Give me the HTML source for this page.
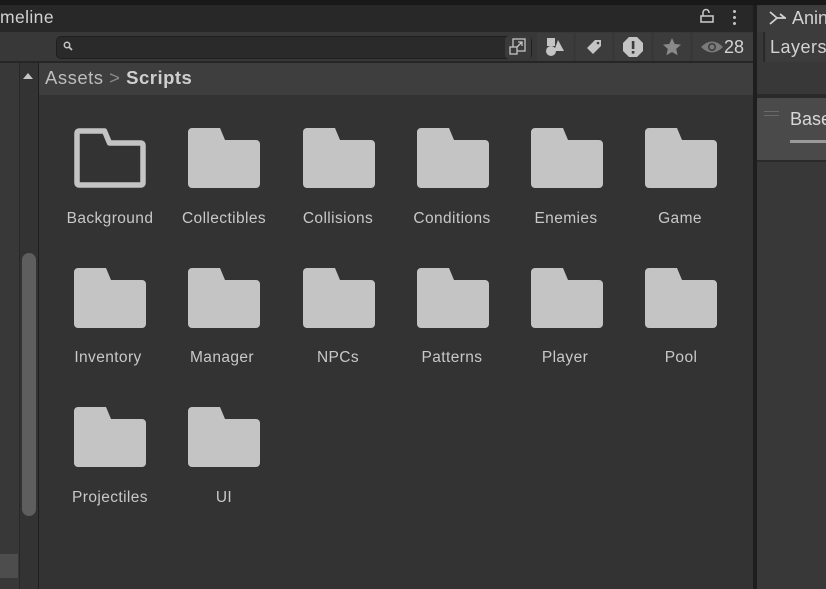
<!DOCTYPE html>
<html><head><meta charset="utf-8"><style>
*{margin:0;padding:0;box-sizing:border-box}
body{width:826px;height:589px;overflow:hidden;background:#333;font-family:"Liberation Sans",sans-serif;position:relative;color:#c4c4c4}
.a{position:absolute}
.lbl{position:absolute;width:114px;text-align:center;font-size:15.5px;color:#c8c8c8;letter-spacing:0.4px}
.btn{position:absolute;top:33px;height:28px;background:#3c3c3c}
</style></head><body>
<div class="a" style="left:0;top:0;width:826px;height:5px;background:#191919"></div>
<div class="a" style="left:0;top:5px;width:753px;height:27px;background:#282828"></div>
<div class="a" style="left:0;top:7px;font-size:17.5px;color:#d2d2d2;letter-spacing:0.4px">meline</div>
<svg class="a" style="left:700px;top:8px" width="14" height="16"><path d="M3 8V4.5a3 3 0 0 1 6 0V5" stroke="#c4c4c4" stroke-width="1.6" fill="none"/><rect x="1" y="8" width="12" height="6" fill="none" stroke="#c4c4c4" stroke-width="1.6"/></svg>
<div class="a" style="left:733px;top:10px;width:3px;height:3px;background:#c4c4c4;border-radius:2px;box-shadow:0 6px #c4c4c4,0 12px #c4c4c4"></div>
<div class="a" style="left:0;top:32px;width:753px;height:30px;background:#383838"></div>
<div class="a" style="left:56px;top:36px;width:476px;height:23px;background:#2a2a2a;border:1px solid #1e1e1e;border-radius:5px"></div>
<svg class="a" style="left:63px;top:41px" width="10" height="10"><circle cx="4" cy="4" r="2.7" stroke="#c4c4c4" stroke-width="1.5" fill="none"/><path d="M6 6l3 3" stroke="#c4c4c4" stroke-width="1.8"/></svg>
<div class="a" style="left:505px;top:36px;width:26px;height:23px;background:#3a3a3a;border-radius:4px"></div>
<svg class="a" style="left:508px;top:37px" width="20" height="20"><rect x="5" y="2" width="12" height="12" fill="none" stroke="#c4c4c4" stroke-width="1.3"/><rect x="2" y="10" width="7" height="7" fill="#3a3a3a" stroke="#c4c4c4" stroke-width="1.3"/><path d="M9 10l5-5M10 5h4v4" stroke="#c4c4c4" stroke-width="1.3" fill="none"/></svg>
<div class="btn" style="left:537px;width:36px"></div>
<div class="btn" style="left:576px;width:36px"></div>
<div class="btn" style="left:615px;width:36px"></div>
<div class="btn" style="left:654px;width:36px"></div>
<div class="btn" style="left:693px;width:60px"></div>
<svg class="a" style="left:545px;top:36px" width="22" height="22"><rect x="2" y="2" width="8" height="8" fill="#c4c4c4"/><circle cx="6" cy="15" r="5" fill="#c4c4c4"/><path d="M13 4l6 11h-10z" fill="#c4c4c4"/></svg>
<svg class="a" style="left:584px;top:37px" width="20" height="20"><path d="M11 3h6v6l-8 8-6-6z" fill="#c4c4c4"/><circle cx="14" cy="6" r="1.3" fill="#3c3c3c"/></svg>
<svg class="a" style="left:621px;top:35px" width="24" height="24"><path d="M8 2h8l6 6v8l-6 6H8l-6-6V8z" fill="#c4c4c4"/><rect x="10.8" y="6" width="2.6" height="8" fill="#3c3c3c"/><rect x="10.8" y="16" width="2.6" height="2.6" fill="#3c3c3c"/></svg>
<svg class="a" style="left:662px;top:37px" width="20" height="20"><path d="M10 1l2.7 6 6.3.6-4.8 4.3 1.4 6.3L10 15l-5.6 3.2 1.4-6.3L1 7.6l6.3-.6z" fill="#8a8a8a"/></svg>
<svg class="a" style="left:700px;top:39px" width="24" height="16"><path d="M1 8Q12-3 23 8Q12 19 1 8z" fill="#7a7a7a"/><circle cx="12" cy="8" r="4" fill="#3c3c3c"/><circle cx="12" cy="8" r="2.5" fill="#7a7a7a"/></svg>
<div class="a" style="left:724px;top:37px;font-size:18px;color:#d2d2d2">28</div>
<div class="a" style="left:0;top:61px;width:753px;height:2px;background:#262626"></div>
<div class="a" style="left:0;top:63px;width:19px;height:526px;background:#383838"></div>
<div class="a" style="left:0;top:554px;width:18px;height:24px;background:#4d4d4d"></div>
<div class="a" style="left:19px;top:63px;width:1px;height:526px;background:#282828"></div>
<div class="a" style="left:20px;top:63px;width:18px;height:526px;background:#333"></div>
<div class="a" style="left:23px;top:73px;width:0;height:0;border-left:5px solid transparent;border-right:5px solid transparent;border-bottom:6px solid #c4c4c4"></div>
<div class="a" style="left:22px;top:253px;width:14px;height:263px;background:#5e5e5e;border-radius:7px"></div>
<div class="a" style="left:38px;top:63px;width:1px;height:526px;background:#1e1e1e"></div>
<div class="a" style="left:39px;top:63px;width:714px;height:32px;background:#3e3e3e"></div>
<div class="a" style="left:45px;top:67px;font-size:18.5px;color:#bdbdbd;letter-spacing:0.5px">Assets <span style="color:#8a8a8a">&gt;</span> <b style="color:#cfcfcf">Scripts</b></div>
<div class="a" style="left:753px;top:5px;width:4px;height:584px;background:#1e1e1e"></div>
<div class="a" style="left:757px;top:5px;width:69px;height:584px;background:#383838"></div>
<div class="a" style="left:757px;top:5px;width:69px;height:27px;background:#3c3c3c;border-radius:4px 0 0 0"></div>
<svg class="a" style="left:769px;top:10px" width="18" height="16"><path d="M1 2l7 6-7 6M8 8h9M11 4l5 4" stroke="#d0d0d0" stroke-width="1.8" fill="none"/></svg>
<div class="a" style="left:792px;top:8px;font-size:18px;color:#d2d2d2">Anin</div>
<div class="a" style="left:757px;top:32px;width:69px;height:30px;background:#383838"></div>
<div class="a" style="left:763px;top:32px;width:2px;height:30px;background:#2a2a2a"></div>
<div class="a" style="left:766px;top:32px;width:60px;height:30px;background:#3c3c3c"></div>
<div class="a" style="left:770px;top:37px;font-size:18px;color:#d2d2d2;letter-spacing:0.5px">Layers</div>
<div class="a" style="left:757px;top:94px;width:69px;height:4px;background:#2a2a2a"></div>
<div class="a" style="left:757px;top:98px;width:69px;height:62px;background:#4a4a4a"></div>
<div class="a" style="left:764px;top:111px;width:15px;height:1px;background:#6a6a6a;box-shadow:0 4px #6a6a6a"></div>
<div class="a" style="left:790px;top:109px;font-size:18px;color:#d8d8d8">Base</div>
<div class="a" style="left:790px;top:140px;width:36px;height:3px;background:#9a9a9a"></div>
<div class="a" style="left:757px;top:160px;width:69px;height:2px;background:#2a2a2a"></div>
<svg width="0" height="0" style="position:absolute"><defs>
<path id="f" d="M0 4a4 4 0 0 1 4-4h28l5 12h31a4 4 0 0 1 4 4v40a4 4 0 0 1-4 4H4a4 4 0 0 1-4-4z"/>
</defs></svg>
<svg class="a" style="left:74px;top:128px" width="72" height="60"><path d="M3 5a2 2 0 0 1 2-2h25.5l5 12H67a2 2 0 0 1 2 2v38a2 2 0 0 1-2 2H5a2 2 0 0 1-2-2z" fill="none" stroke="#c4c4c4" stroke-width="5.5" stroke-linejoin="round"/></svg>
<svg class="a" style="left:188px;top:128px" width="72" height="60"><use href="#f" fill="#c4c4c4"/></svg>
<svg class="a" style="left:303px;top:128px" width="72" height="60"><use href="#f" fill="#c4c4c4"/></svg>
<svg class="a" style="left:417px;top:128px" width="72" height="60"><use href="#f" fill="#c4c4c4"/></svg>
<svg class="a" style="left:531px;top:128px" width="72" height="60"><use href="#f" fill="#c4c4c4"/></svg>
<svg class="a" style="left:645px;top:128px" width="72" height="60"><use href="#f" fill="#c4c4c4"/></svg>
<svg class="a" style="left:74px;top:268px" width="72" height="60"><use href="#f" fill="#c4c4c4"/></svg>
<svg class="a" style="left:188px;top:268px" width="72" height="60"><use href="#f" fill="#c4c4c4"/></svg>
<svg class="a" style="left:303px;top:268px" width="72" height="60"><use href="#f" fill="#c4c4c4"/></svg>
<svg class="a" style="left:417px;top:268px" width="72" height="60"><use href="#f" fill="#c4c4c4"/></svg>
<svg class="a" style="left:531px;top:268px" width="72" height="60"><use href="#f" fill="#c4c4c4"/></svg>
<svg class="a" style="left:645px;top:268px" width="72" height="60"><use href="#f" fill="#c4c4c4"/></svg>
<svg class="a" style="left:74px;top:407px" width="72" height="60"><use href="#f" fill="#c4c4c4"/></svg>
<svg class="a" style="left:188px;top:407px" width="72" height="60"><use href="#f" fill="#c4c4c4"/></svg>
<div class="lbl" style="left:53px;top:210px">Background</div>
<div class="lbl" style="left:167px;top:210px">Collectibles</div>
<div class="lbl" style="left:281px;top:210px">Collisions</div>
<div class="lbl" style="left:395px;top:210px">Conditions</div>
<div class="lbl" style="left:509px;top:210px">Enemies</div>
<div class="lbl" style="left:623px;top:210px">Game</div>
<div class="lbl" style="left:51px;top:349px">Inventory</div>
<div class="lbl" style="left:165px;top:349px">Manager</div>
<div class="lbl" style="left:281px;top:349px">NPCs</div>
<div class="lbl" style="left:395px;top:349px">Patterns</div>
<div class="lbl" style="left:508px;top:349px">Player</div>
<div class="lbl" style="left:624px;top:349px">Pool</div>
<div class="lbl" style="left:53px;top:489px">Projectiles</div>
<div class="lbl" style="left:167px;top:489px">UI</div>
</body></html>
